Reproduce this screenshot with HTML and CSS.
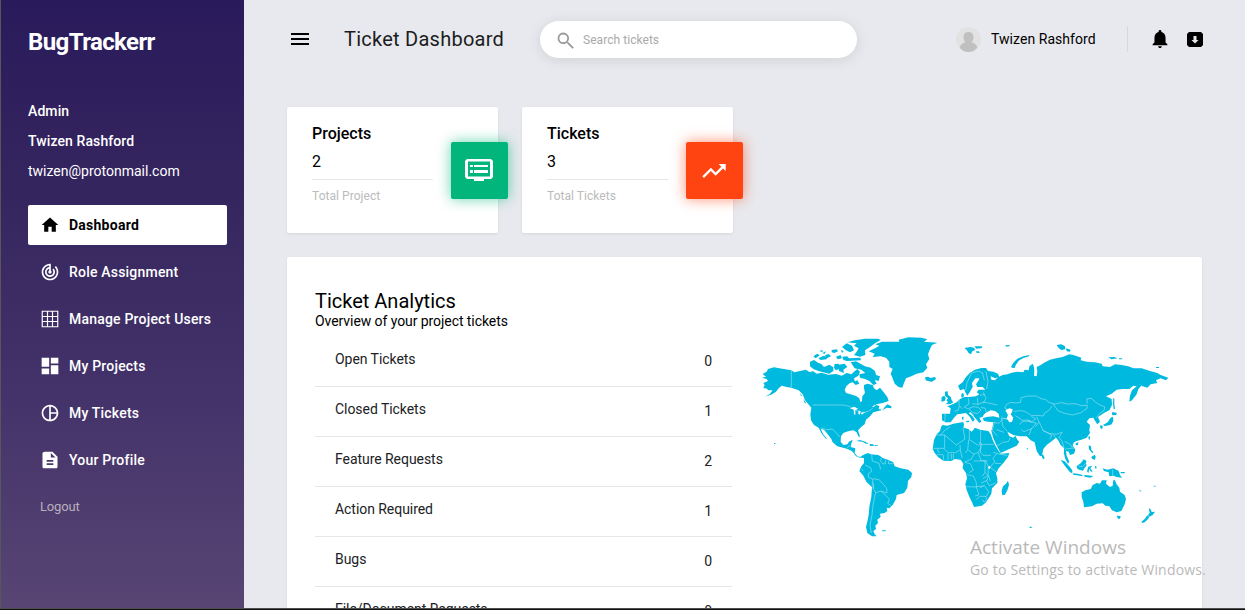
FILE: index.html
```html
<!DOCTYPE html>
<html lang="en">
<head>
<meta charset="utf-8">
<title>Ticket Dashboard</title>
<link rel="stylesheet" href="styles.css">
</head>
<body>
<div class="app">
  <aside class="sidebar">
    <h1 class="brand">BugTrackerr</h1>
    <div class="account">
      <div class="role">Admin</div>
      <div class="name">Twizen Rashford</div>
      <div class="email">twizen@protonmail.com</div>
    </div>
    <nav class="nav">
      <a class="nav-item active"><svg viewBox="0 0 24 24"><path d="M10 20v-6h4v6h5v-8h3L12 3 2 12h3v8z"/></svg><span>Dashboard</span></a>
      <a class="nav-item"><svg viewBox="0 0 24 24"><path d="M19.07 4.93l-1.41 1.41C19.1 7.79 20 9.79 20 12c0 4.42-3.58 8-8 8s-8-3.58-8-8c0-4.08 3.05-7.44 7-7.93v2.02C8.16 6.57 6 9.03 6 12c0 3.31 2.69 6 6 6s6-2.69 6-6c0-1.66-.67-3.16-1.76-4.24l-1.41 1.41C15.55 9.9 16 10.9 16 12c0 2.21-1.79 4-4 4s-4-1.79-4-4c0-1.86 1.28-3.41 3-3.86v2.14c-.6.35-1 .98-1 1.72 0 1.1.9 2 2 2s2-.9 2-2c0-.74-.4-1.38-1-1.72V2h-1C6.48 2 2 6.48 2 12s4.48 10 10 10 10-4.48 10-10c0-2.76-1.12-5.26-2.93-7.07z"/></svg><span>Role Assignment</span></a>
      <a class="nav-item"><svg viewBox="0 0 24 24"><path fill="none" stroke="currentColor" stroke-width="1.4" d="M2.7 2.7h18.6v18.6H2.7zM9 2.7v18.6M15 2.7v18.6M2.7 9h18.6M2.7 15h18.6"/></svg><span>Manage Project Users</span></a>
      <a class="nav-item"><svg viewBox="0 0 24 24"><path d="M2 2h9v11H2zM13 2h9v7h-9zM2 15h9v7H2zM13 11h9v11h-9z"/></svg><span>My Projects</span></a>
      <a class="nav-item"><svg viewBox="0 0 24 24"><path d="M12 2C6.48 2 2 6.48 2 12s4.48 10 10 10 10-4.48 10-10S17.52 2 12 2zm1 2.07c3.61.45 6.48 3.33 6.93 6.93H13V4.07zM4 12c0-4.06 3.07-7.44 7-7.93v15.87c-3.93-.5-7-3.88-7-7.94zm9 7.93V13h6.93c-.45 3.61-3.32 6.48-6.93 6.93z"/></svg><span>My Tickets</span></a>
      <a class="nav-item"><svg viewBox="0 0 24 24"><path d="M14 2H6c-1.700 0-3 .9-3 2v16c0 1.100.9 2 2 2h14c1.100 0 2-.9 2-2V8l-6-6zm2 16H8v-2h8v2zm0-4H8v-2h8v2zm-3-5V3.500L18.500 9H13z"/></svg><span>Your Profile</span></a>
    </nav>
    <a class="logout">Logout</a>
  </aside>

  <div class="page">
    <header class="topbar">
      <svg class="menu" viewBox="0 0 18 12"><path d="M0 0h18v2H0zM0 5h18v2H0zM0 10h18v2H0z"/></svg>
      <h2 class="title">Ticket Dashboard</h2>
      <div class="search">
        <svg viewBox="0 0 24 24"><path d="M15.500 14h-.79l-.28-.27A6.500 6.500 0 1 0 13.730 14.430l.27.28v.79l6 6 1.500-1.500zM9.500 14A4.500 4.500 0 1 1 9.500 5a4.500 4.500 0 0 1 0 9z"/></svg>
        <span>Search tickets</span>
      </div>
      <div class="user">
        <svg class="avatar" viewBox="0 0 24 24"><circle cx="12" cy="12" r="12" fill="#e2e2e2"/><ellipse cx="12" cy="10" rx="4.800" ry="5.500" fill="#c0c0c0"/><path fill="#c0c0c0" d="M3.500 19.800c1.200-3.600 4-5.300 8.500-5.300s7.300 1.700 8.500 5.300A12 12 0 0 1 12 24a12 12 0 0 1-8.500-4.200z"/></svg>
        <span>Twizen Rashford</span>
      </div>
      <div class="actions">
        <svg class="bell" viewBox="4 2.500 16 19.500"><path d="M12 22c1.100 0 2-.9 2-2h-4c0 1.100.9 2 2 2zm6-6v-5c0-3.070-1.630-5.640-4.500-6.320V4c0-.83-.67-1.500-1.500-1.500s-1.500.67-1.500 1.500v.68C7.640 5.360 6 7.920 6 11v5l-2 2v1h16v-1l-2-2z"/></svg>
        <svg class="archive" viewBox="0 0 16 15"><path fill-rule="evenodd" d="M2 0h12l2 2v11l-2 2H2l-2-2V2zM6.500 4v4H4.500L8 11.500 11.500 8h-2V4z"/></svg>
      </div>
    </header>

    <section class="cards">
      <article class="card">
        <h3>Projects</h3>
        <div class="count">2</div>
        <div class="caption">Total Project</div>
        <div class="tile green"><svg viewBox="0 0 28 23"><path fill-rule="evenodd" d="M2 0h24l2 2v16l-2 2h-7v2H9v-2H2l-2-2V2zM3 2.500v15h22v-15zM5 6h3v2H5zM9 6h14v2H9zM5 11h3v3H5zM9 11h14v3H9z"/></svg></div>
      </article>
      <article class="card">
        <h3>Tickets</h3>
        <div class="count">3</div>
        <div class="caption">Total Tickets</div>
        <div class="tile orange"><svg viewBox="0 0 28 28"><path d="M18.600 7l2.700 2.700-5.700 5.700-4.700-4.700L2.300 19.300 4 21l6.900-6.900 4.700 4.700 7.400-7.400 2.700 2.700V7z"/></svg></div>
      </article>
    </section>

    <main class="panel">
      <div class="analytics">
        <h2>Ticket Analytics</h2>
        <p>Overview of your project tickets</p>
        <ul class="stats">
          <li><span>Open Tickets</span><b>0</b></li>
          <li><span>Closed Tickets</span><b>1</b></li>
          <li><span>Feature Requests</span><b>2</b></li>
          <li><span>Action Required</span><b>1</b></li>
          <li><span>Bugs</span><b>0</b></li>
          <li><span>File/Document Requests</span><b>0</b></li>
        </ul>
      </div>
      <svg class="map" viewBox="0 0 1290 660">
        <g class="land">
          <!-- North America -->
          <path d="M36 158L48 155 38 147 50 140 54 132 72 127 88 130 124 136 133 142 150 138 168 134 178 141 190 139 200 146 215 143 235 149 258 147 275 152 290 144 304 148 312 140 322 132 330 140 325 152 312 160 315 170 300 174 290 182 284 194 288 204 302 208 318 213 328 220 331 232 336 228 337 214 345 204 342 190 342 180 352 176 368 180 372 190 380 196 390 188 400 200 412 216 416 228 400 233 380 238 366 248 380 240 388 243 386 252 398 255 404 246 412 238 424 244 424 250 410 248 400 254 385 258 370 262 360 274 348 284 344 298 336 304 324 316 328 328 330 336 325 334 320 322 310 316 294 319 280 324 273 334 272 350 280 360 292 358 297 350 308 344 304 356 302 366 316 370 314 384 322 394 332 396 338 390 344 398 330 398 318 394 308 380 298 374 285 370 262 364 248 352 244 342 232 326 222 314 212 312 220 328 232 343 226 340 214 324 206 308 192 300 183 286 181 268 184 248 174 236 165 226 158 208 146 196 124 188 110 186 95 182 86 190 78 200 66 208 46 215 60 206 68 196 56 196 48 190 40 190 44 180 40 174 54 168 50 162Z"/>
          <!-- Arctic islands -->
          <path d="M180 110L192 105 204 113 214 117 222 126 238 119 250 127 250 138 238 146 220 142 205 138 190 132 180 124ZM190 94l12-8 7 5-12 9zM205 100l16-8 12 5-4 6-17 2zM224 91l12-4 7 6-10 6zM245 75l15-2 4 6-11 5-8-2zM258 95l14-5 4 10-13 3zM254 117l12-1 3 15-12 5-5-8zM266 119l18-3 8 10-12 8 2 10-15-6zM277 95l14-1 6 6 34-2 2 8-42 2-11-3zM276 66L290 55 306 62 312 76 300 82 288 76ZM292 52L314 46 345 41 385 41 392 45 376 54 360 66 345 76 346 90 330 95 312 90 320 80 326 70 312 62 320 55ZM302 112L318 109 345 124 362 128 375 138 378 150 390 154 386 168 374 165 380 176 370 180 358 168 345 162 330 158 328 148 346 144 334 134 314 130ZM308 172l14-6 6 10-11 4zM208 77l11-1-3 6zM217 84l11-5-4 8zM273 74l8 5-5 5z"/>
          <!-- Greenland and Iceland -->
          <path d="M356 79L378 68 388 62 376 58 396 50 430 50 448 50 446 44 475 37 515 38 532 43 522 50 562 53 546 60 540 72 534 88 538 102 528 118 532 128 520 142 500 146 484 154 468 160 462 174 457 188 446 186 434 176 428 160 422 146 428 132 418 126 418 110 408 98 392 94 368 96 374 86ZM525 157l9-2 8 4 13-3 3 6-12 8-10-1-9-3z"/>
          <!-- Caribbean and Pacific specks -->
          <path d="M318 348l12-3 16 5 10 7-8-1-11-6-12-1zM359 357l10 1 5 4-14 1zM72 354h4v3h-4zM396 616h11v3h-10zM375 360l8 1v2h-8zM150 204l6 8-3 2zM160 222l9 13-5-1z"/>
          <!-- South America -->
          <path d="M333 396L344 388 354 384 362 388 385 390 400 400 414 404 430 412 434 424 452 430 475 434 486 444 484 456 474 468 472 488 462 504 440 510 438 522 428 540 418 550 410 548 412 558 404 564 390 566 392 576 382 584 384 594 376 602 378 612 370 618 374 628 380 634 366 634 352 624 348 606 352 590 356 570 358 545 364 515 366 486 350 472 340 452 328 438 334 424 342 414 342 400Z"/>
        </g>
        <g class="land" transform="translate(510 0)">
          <!-- Britain, Ireland, Arctic islands -->
          <path d="M75 200l8-1 1 11 8 5 3 11 5 6-9 5-14 1 7-7-5-5 5-6-9-8zM65 216l8-4 4 7-3 9-10 2zM133 69l18-3 11 2 4 7-9 4-4 9-7-4-6-9zM163 64l22 0 2 5-18 2zM168 79l9 0 3 4-10 1zM256 61l13-1-1 4-10 1zM273 126l7-13 12-12 18-7 18-4-1 4-17 5-14 8-9 14-3 8-8-1zM410 60l14-2 11 6 1 9-13 2-9-8zM438 70l14 4-2 6-10-1zM565 97l19-1 8 4-18 3zM597 100l10 0-1 3-9 0zM707 126h10v3h-8z"/>
          <!-- Eurasia -->
          <path d="M114 182L128 172 138 156 150 143 165 134 184 129 198 129 204 138 220 140 234 146 238 156 226 160 212 154 214 164 224 166 236 156 248 150 262 148 275 143 292 140 310 142 314 134 326 136 328 124 338 116 342 126 343 140 342 152 350 154 352 140 350 126 362 120 375 112 390 104 408 100 428 96 448 88 460 90 484 98 482 106 500 110 525 112 545 116 548 124 570 126 585 118 605 120 625 124 640 130 665 130 690 138 712 144 722 150 745 158 738 166 722 160 708 166 712 174 692 178 682 188 664 182 655 192 650 208 636 226 628 230 630 212 636 196 650 184 640 182 628 192 608 192 590 194 575 206 558 214 575 222 576 240 568 256 552 264 534 276 540 290 532 298 524 286 520 278 508 280 500 290 510 300 508 316 510 324 500 338 484 344 470 348 462 352 458 360 466 374 462 386 450 390 446 380 438 378 440 392 448 410 444 416 436 402 432 386 432 370 422 360 414 345 408 338 396 348 380 360 370 372 366 392 360 394 350 378 344 352 332 346 320 334 300 334 280 330 262 320 268 334 280 338 286 332 292 344 298 350 290 362 268 372 242 384 232 366 220 340 214 318 218 304 220 292 205 290 192 288 188 280 200 276 220 274 238 278 236 266 225 258 212 256 200 262 192 268 188 276 178 278 184 290 178 294 170 284 160 272 152 262 146 264 158 274 164 284 158 290 150 276 138 264 124 266 112 268 102 278 92 292 76 292 66 286 66 266 90 266 92 250 82 244 98 238 110 232 120 222 134 216 146 216 168 214 178 208 170 202 176 194 196 194 188 186 172 186 168 178 176 166 178 160 166 160 156 174 158 186 150 200 142 212 136 202 132 192 120 196Z"/>
          <path d="M124 208l5-5 3 7-2 8-6-1zM126 276l5-1-1 9-4-1zM137 288l10-1 1 4-8 1zM365 388l5 2 4 9-4 4-4-6z"/>
          <!-- East Asian islands -->
          <path d="M580 218l3 3 0 17 2 13-4 2-2-17zM578 261l13 3-3 6-10 1-3-5zM579 275l1 12-5 11-8 3-13 2-5-3 14-8 9-14zM540 301l8 1-1 10-6-2zM506 334l4 0-1 12-4-6zM506 361l7 3 1 11 6 6-3 4-10-12zM513 397l11-8 3 5-2 11-8-4zM466 356l9-5-1 9-6 1z"/>
          <!-- Southeast Asia -->
          <path d="M422 405l12 4 13 14 10 13 0 9-7-3-15-19zM459 445l14 1 15 4-1 4-16-3-12-2zM470 423l12-8 9-12 9 5-3 7 3 6-7 9-4 7-12-3-6-4zM505 425l12-3-6 8 7 9-5 1-5-8-3 13-4-7zM492 450l10 1 18 2-9 5-17-3zM525 423l4 0 0 10-3-3zM548 430L562 434 580 430 596 438 600 450 606 458 590 456 580 452 568 454 566 442 552 438ZM602 441l13 0-2 4-11 0zM655 493l9 5-2 2zM700 482l10 1-7 2z"/>
          <!-- Australia and New Zealand -->
          <path d="M485 502L496 496 512 492 518 480 530 474 540 476 546 466 560 466 558 476 570 486 578 482 580 466 584 464 590 478 598 488 600 500 614 510 618 522 614 538 604 558 590 562 576 556 568 544 556 542 548 535 530 536 516 544 492 547 490 530 485 516ZM590 572l12 1-2 8-6 0zM686 548l7 7 2 6 10-1-7 10-10 5-4-5 5-6zM682 571L688 576 682 584 674 592 668 594 664 591 674 582Z"/>
          <!-- Africa -->
          <path d="M68 300L82 302 100 296 130 291 132 300 130 308 145 312 155 320 165 308 180 314 205 318 212 328 218 345 228 365 236 378 242 386 268 384 264 396 250 414 236 430 228 445 232 460 232 474 216 490 214 506 206 520 198 532 186 542 162 546 156 532 148 515 140 495 136 478 141 460 138 444 128 430 130 416 122 404 104 402 94 408 70 407 54 396 44 384 38 372 42 345 50 328 60 318 64 304Z"/>
          <path d="M264 467L267 480 262 496 255 509 247 511 245 498 249 484 258 476ZM329 605h6v4h-6zM320 370h4v3h-4z"/>
        </g>
        <g class="borders">
          <path d="M124 136v51M188 240h92l20 5 10 7 14 7 16 4 15-4 13-9M213 309l19 5 15-2 12 12 12 13M291 370l9-11M345 420l17 8 3 11-10 7 0 11 13 5 1 29M339 438l-4-6M365 390l2 18 20 7 5 18M395 398l-4 9 7 9 8 1 0-12M418 404l-3 12 16 0M369 461l18 3 14 15 10 13-1 12-17-6-16 5-6-10 0-16-5-5M377 503L369 540 366 570 360 600 364 624M393 498l17 16 8 9-5 12 10 7"/>
          <g transform="translate(510 0)">
            <path d="M137 196l4-23 14-29 21-6 12 7M187 142l6 24M198 139L204 170 200 192M117 223l0 18 10 10M145 220l2 17-15 9M172 218l2 20-17-2M146 251l13-6 15 2 9 8-11 11-14-4zM174 239l16-8 20 4 22 5M190 202l8 18-8 15M182 248l13 1 4 12M180 211l15-3M133 246l12 6M119 242l-5 14-10 3M72 268l4 2-2 20M155 265l7 7M243 275l7 6 12-1M254 249l6-11 12-6 16 2 14-2 1-14 21-5 25 0 14 8 14 3 10 8 15 5M254 249l10 5M396 243l-9 13-13 8-4 9-19-2-16 1-17-11-14-4-23 2M400 238l24-5 18 4 23-1 19 6 18-1-1 9-18 13-26 7-23-5-19-7zM502 236l-2-14 14-2 12 11 12 8 17 7-4 12-12 7-10 13M286 272l22 14 15-1 10 5M334 274l13 8-12 8-13-5M220 292l16 3 12-11M244 279l5 26 13 14M248 280l16 3M300 299l6-10 15 0 28 5-14 17-23 9-8-6M335 310l-8 20M350 275l7 16-10 14M358 292l11 24 18 9 22 3 18-7M368 316l27 14-4 11M400 329l6 9M427 322l-10 15 10 13 5 20M434 350l14 6 8 10 7-1M434 373l16-3 12-1M223 292l-6 24 14 16M230 314l22 8M231 363l17-11 17-2 6-11"/>
            <path d="M61 332l12-15 18-12M48 330l26 0 0 40M74 330l35 30 26-18-6-33M40 370h34M52 372l6 12M50 389h19M70 390l1 15M84 385v20M94 386v17M100 386v16M73 373l12 10h22l14-9-1-14M121 375l6 24M148 315l0 29 28 18M182 316v42h39M146 344l-3 31-7 9M145 376l17 11 13-5 8-15-6-16M184 356l-3 26 8 9 24 0M162 387l-8 15-20 9M175 384l8 22 20 2M134 412l17 4 9 19-13 8M161 408l34 0 0 34-8 12M141 449l19 4 9 20 0 13-31-1M169 486l8 23-12 4M169 485l21-2M196 407l9 17 7 1 9-12M205 424l-1 27-15 10M211 427l19 15M195 442l10 10-4 14-18 8M206 452l5 17M200 466l7 16 20-8M179 489l14-8 13 20-7 13-21 0-9 10M196 514l5 9-9 8-5-7M220 382l21 6 21 3M229 387l-10 13 7 15 18 1M578 433v19M475 423l13 2 8-9"/>
          </g>
        </g>
        <g class="lakes"><path d="M300 250l13-5 12 7-9 3 0 14-4-1-1-14zM322 253l10 7-3 9-4-2 1-11zM333 264l14-4-12 9zM366 246l9-8-3 7zM714 425l5-2 3 5-5 5zM766 256L778 250 788 253 786 262 782 268 790 278 786 291 778 292 770 280 774 270Z"/></g>
      </svg>
    </main>
  </div>
</div>
<div class="watermark"><div class="wm-title">Activate Windows</div><div class="wm-text">Go to Settings to activate Windows.</div></div>
<div class="screen-edge"></div>
</body>
</html>
```

FILE: styles.css
```css
* { box-sizing: border-box; }
body { margin: 0; width: 1245px; height: 610px; overflow: hidden; background: #e8e9ee; color: #000; font-family: Roboto, "Liberation Sans", sans-serif; font-size: 14px; }
h1, h2, h3, p, ul { margin: 0; padding: 0; font-weight: 400; }
svg { display: block; fill: currentColor; flex: none; }
span, h1, h2, h3, p { white-space: nowrap; }
.app { display: flex; height: 610px; overflow: hidden; }

.sidebar { width: 244px; flex: none; padding: 28px 17px 0 27px; border-left: 1px solid #57575a; color: #fff; background: linear-gradient(#291a5b 0, #36265f 33%, #44336a 65%, #584574 100%); }
.brand { font-size: 24px; line-height: 28px; font-weight: 700; letter-spacing: -.6px; }
.account { margin-top: 40px; line-height: 30px; letter-spacing: .1px; }
.role, .name { font-weight: 500; }
.email { font-weight: 400; letter-spacing: 0; }
.nav { margin-top: 19px; display: flex; flex-direction: column; gap: 7px; }
.nav-item { height: 40px; display: flex; align-items: center; gap: 9px; padding-left: 12px; border-radius: 2px; font-weight: 500; letter-spacing: .2px; }
.nav-item svg { width: 20px; height: 20px; }
.nav-item.active { background: #fff; color: #000; font-weight: 700; letter-spacing: .25px; }
.logout { display: block; margin: 18px 0 0 12px; font-size: 13px; line-height: 18px; letter-spacing: -.15px; color: #b7b0bc; }

.page { flex: 1; min-width: 0; padding: 0 43px; }
.topbar { height: 78px; display: flex; align-items: center; }
.topbar > * { flex: none; }
.menu { width: 18px; height: 12px; margin-left: 4px; }
.title { width: 196px; margin-left: 35px; font-size: 20px; line-height: 24px; letter-spacing: .25px; color: #1c1c20; }
.search { width: 317px; height: 37px; padding: 2px 0 0 15px; display: flex; align-items: center; gap: 7px; border-radius: 19px; background: #fff; color: #aaa; font-size: 12px; letter-spacing: .05px; box-shadow: 0 2px 14px #0000001a; }
.search svg { width: 21px; height: 21px; color: #999; }
.user { width: 172px; height: 26px; margin-left: 99px; display: flex; align-items: center; gap: 10px; border-right: 1px solid #d7d8de; letter-spacing: .05px; }
.avatar { width: 25px; height: 25px; }
.actions { display: flex; align-items: center; gap: 19px; margin-left: 24px; }
.bell { width: 16px; height: 18px; }
.archive { width: 16px; height: 15px; }

.cards { display: flex; gap: 24px; margin-top: 29px; }
.card { position: relative; width: 211px; height: 126px; padding: 17px 25px 0; border-radius: 2px; background: #fff; box-shadow: 0 1px 3px #00000014; }
.card h3 { font-size: 16px; line-height: 20px; font-weight: 500; letter-spacing: 0; }
.count { width: 121px; height: 36px; padding-top: 8px; font-size: 16px; line-height: 20px; border-bottom: 1px solid #e5e5ec; }
.caption { margin-top: 8px; font-size: 12px; line-height: 16px; letter-spacing: .05px; color: #bbb; }
.tile { position: absolute; right: -10px; top: 34.5px; width: 57px; height: 57px; padding: 1px 2px 0 0; display: grid; place-items: center; color: #fff; border-radius: 2px; }
.tile svg { width: 28px; }
.green { background: #02b57b; box-shadow: 0 0 14px #02b57b99; }
.orange { background: #ff4412; box-shadow: 0 0 14px #ff441299; }

.panel { height: 400px; margin-top: 24px; padding: 33px 34px 0 28px; display: flex; justify-content: space-between; border-radius: 2px; background: #fff; box-shadow: 0 1px 3px #00000014; }
.analytics { width: 417px; }
.analytics h2 { font-size: 20px; line-height: 22px; letter-spacing: 0; }
.analytics p { line-height: 18px; letter-spacing: -.07px; }
.stats { list-style: none; margin-top: 7px; color: #202124; letter-spacing: -.05px; }
.stats li { height: 50px; padding: 12px 20px 0; display: flex; justify-content: space-between; line-height: 20px; border-bottom: 1px solid #e6e6e8; }
.stats b { padding-top: 2px; font-weight: 400; }
.map { width: 430px; height: 220px; margin: 35px -12px 0 0; }
.land { fill: #00b9df; }
.borders { fill: none; stroke: #a5e4f1; stroke-width: 1.8; }
.lakes { fill: #fff; }

.watermark { position: absolute; left: 970px; top: 535px; white-space: nowrap; color: #b9b9b9; font-family: "Open Sans", "Noto Sans", sans-serif; }
.wm-title { font-size: 19px; line-height: 25px; }
.wm-text { font-size: 14px; line-height: 20px; letter-spacing: .19px; }
.screen-edge { position: absolute; left: 0; right: 0; bottom: 0; height: 2px; border-top: 1px solid #4e4e50; background: #111216; }
```
